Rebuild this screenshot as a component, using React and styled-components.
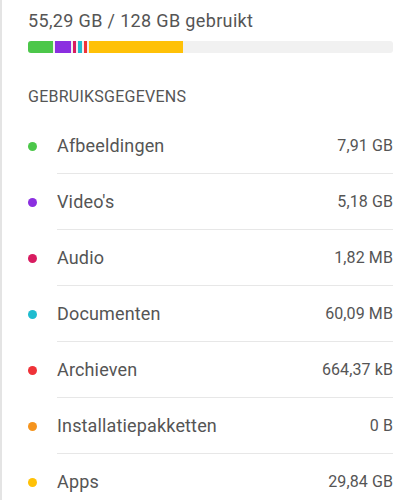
import React from "react";
import styled, { createGlobalStyle } from "styled-components";

const GlobalStyle = createGlobalStyle`
  html, body {
    margin: 0;
    padding: 0;
    background: #ffffff;
    font-family: Roboto, "Noto Sans", sans-serif;
  }
`;

const Page = styled.div`
  min-height: 500px;
  border-left: 2px solid #e4e4e4;
  padding: 10px 27px 0 26px;
  box-sizing: border-box;
  color: #555555;
`;

const UsageText = styled.div`
  font-size: 18px;
  line-height: 22px;
  letter-spacing: 0.35px;
`;

const Bar = styled.div`
  display: flex;
  gap: 2px;
  height: 12px;
  margin-top: 9px;
  background: #f1f1f1;
  border-radius: 3px;
  overflow: hidden;
`;

const Segment = styled.div`
  width: ${(p) => p.$w}px;
  background: ${(p) => p.$color};
  flex-shrink: 0;
`;

const SectionTitle = styled.div`
  margin-top: 34px;
  font-size: 16px;
  line-height: 20px;
  letter-spacing: 0.25px;
`;

const List = styled.div`
  margin-top: 11px;
`;

const Row = styled.div`
  display: flex;
  align-items: center;
  height: 56px;
`;

const Dot = styled.span`
  width: 9px;
  height: 9px;
  border-radius: 50%;
  background: ${(p) => p.$color};
  margin: 0 20px 0 0;
  flex-shrink: 0;
`;

const Body = styled.div`
  flex: 1;
  display: flex;
  align-items: center;
  justify-content: space-between;
  height: 100%;
  border-bottom: 1px solid ${(p) => (p.$last ? "transparent" : "#e7e7e7")};
  box-sizing: border-box;
`;

const Label = styled.span`
  font-size: 18px;
  letter-spacing: 0.15px;
`;

const Value = styled.span`
  font-size: 16px;
  letter-spacing: 0.1px;
`;

const segments = [
  { w: 25, color: "#4cc74a" },
  { w: 16, color: "#8b2fe0" },
  { w: 3, color: "#d81b60" },
  { w: 4, color: "#1fbccf" },
  { w: 3, color: "#ef3238" },
  { w: 94, color: "#ffc107" },
];

const items = [
  { label: "Afbeeldingen", value: "7,91 GB", color: "#4cc74a" },
  { label: "Video's", value: "5,18 GB", color: "#8b2fe0" },
  { label: "Audio", value: "1,82 MB", color: "#d81b60" },
  { label: "Documenten", value: "60,09 MB", color: "#1fbccf" },
  { label: "Archieven", value: "664,37 kB", color: "#ef3238" },
  { label: "Installatiepakketten", value: "0 B", color: "#f5941e" },
  { label: "Apps", value: "29,84 GB", color: "#ffc107" },
];

const App = () => {
  return (
    <>
      <GlobalStyle />
      <Page>
        <UsageText>55,29 GB / 128 GB gebruikt</UsageText>
        <Bar>
          {segments.map((s, i) => (
            <Segment key={i} $w={s.w} $color={s.color} />
          ))}
        </Bar>
        <SectionTitle>GEBRUIKSGEGEVENS</SectionTitle>
        <List>
          {items.map((item, i) => (
            <Row key={item.label}>
              <Dot $color={item.color} />
              <Body $last={i === items.length - 1}>
                <Label>{item.label}</Label>
                <Value>{item.value}</Value>
              </Body>
            </Row>
          ))}
        </List>
      </Page>
    </>
  );
};

export default App;
